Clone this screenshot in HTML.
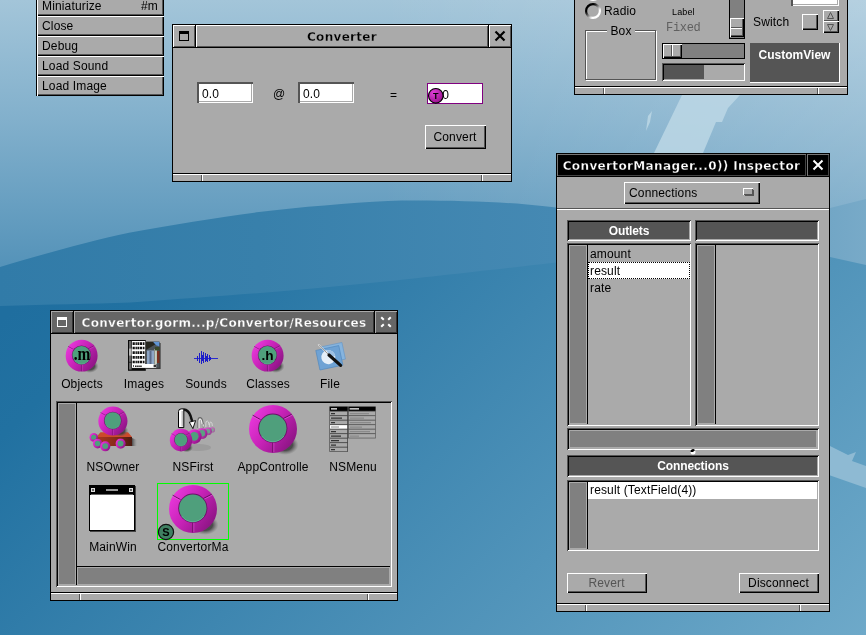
<!DOCTYPE html>
<html>
<head>
<meta charset="utf-8">
<title>Gorm - Convertor</title>
<style>
html,body{margin:0;padding:0;}
body{width:866px;height:635px;overflow:hidden;position:relative;background:#2a76a5;font-family:"Liberation Sans",sans-serif;font-size:12px;color:#000;}
.abs,.abs *{position:absolute;box-sizing:border-box;}
#bg{position:absolute;left:0;top:0;width:866px;height:635px;}
.win{background:#aaa;border:1px solid #000;}
.raised{background:#aaa;box-shadow:inset 1px 1px 0 #fff,inset -1px -1px 0 #000,inset -2px -2px 0 #555;}
.sunken{box-shadow:inset 1px 1px 0 #555,inset -1px -1px 0 #fff,inset 2px 2px 0 #000,inset -2px -2px 0 #aaa;}
.field{background:#fff;box-shadow:inset 2px 2px 0 #555,inset -1px -1px 0 #fff,inset -2px -2px 0 #aaa;}
.tb{background:#aaa;box-shadow:inset 1px 1px 0 #fff,inset -1px -1px 0 #555;}
.tbk{background:#000;box-shadow:inset 1px 1px 0 #777,inset -1px -1px 0 #444;}
.tbm{background:#666;box-shadow:inset 1px 1px 0 #aaa,inset -1px -1px 0 #333;}
.ttl{font-family:"DejaVu Sans","Liberation Sans",sans-serif;font-weight:bold;font-size:12px;letter-spacing:0.3px;text-align:center;white-space:nowrap;line-height:24px;}
.bl{background:#000;}
.t{white-space:nowrap;line-height:14px;letter-spacing:0.15px;margin-top:1px;}
.hdr{background:#555;color:#fff;font-weight:bold;text-align:center;line-height:23px;letter-spacing:-0.1px;box-shadow:inset 1px 1px 0 #555,inset -1px -1px 0 #fff,inset 2px 2px 0 #000,inset -2px -2px 0 #aaa;}
.scr{background:#808080;}
.rb{background:#aaa;}
</style>
</head>
<body>
<svg id="bg" width="866" height="635" viewBox="0 0 866 635">
<defs>
<linearGradient id="g1" gradientUnits="userSpaceOnUse" x1="0" y1="0" x2="0" y2="265"><stop offset="0" stop-color="#a3c5d9"/><stop offset="0.45" stop-color="#82b0cc"/><stop offset="1" stop-color="#5593b9"/></linearGradient>
<linearGradient id="g1b" gradientUnits="userSpaceOnUse" x1="380" y1="0" x2="866" y2="0"><stop offset="0" stop-color="#fff" stop-opacity="0"/><stop offset="1" stop-color="#fff" stop-opacity="0.2"/></linearGradient>
<linearGradient id="gm" gradientUnits="userSpaceOnUse" x1="0" y1="0" x2="866" y2="0"><stop offset="0" stop-color="#317ba8"/><stop offset="0.3" stop-color="#3880ab"/><stop offset="0.64" stop-color="#4589b3"/><stop offset="1" stop-color="#78aac8"/></linearGradient>
<linearGradient id="g2" gradientUnits="userSpaceOnUse" x1="0" y1="320" x2="590" y2="910"><stop offset="0" stop-color="#1f6e9f"/><stop offset="0.1" stop-color="#2171a1"/><stop offset="1" stop-color="#6ea9c9"/></linearGradient>
</defs>
<rect width="866" height="635" fill="url(#g1)"/>
<rect width="866" height="300" fill="url(#g1b)"/>
<path d="M654,153 L682,95 L740,95 L728,108 L722,122 L716,122 L703,153 Z M646,131 L648,116 L652,111 L650,122 Z" fill="#bcd7e5" opacity="0.85"/>
<path d="M0,267 C40,255 90,241 129,232.7 C170,225 220,217 259,212 C300,207 350,203 388,201 C420,200 480,201 517,203.6 C530,204.6 545,206.4 556,207.5 C650,215 760,214 830,208 L866,199 L866,635 L0,635 Z" fill="url(#gm)"/>
<path d="M0,306 C50,304.5 90,304 130,302.6 C180,299 220,296 260,293 C310,289 350,285 390,281 C420,278 490,270 517,267 C540,264.5 600,256 700,254 C760,253 800,254 830,257 L866,265 L866,635 L0,635 Z" fill="url(#g2)"/>
<path d="M826,444 L848,455 L856,452 L852,461 L866,466 L866,488 L826,474 Z" fill="#8ebad3"/>
</svg>
<div class="abs" id="root" style="left:0;top:0;width:866px;height:635px;will-change:transform;">

<!-- menu -->
<div id="menu" style="left:36px;top:-5px;width:128px;height:101px;background:#000;">
  <div class="raised" style="left:1px;top:1px;width:127px;height:20px;"><div class="t" style="left:5px;top:2px;">Miniaturize</div><div class="t" style="right:6px;top:2px;">#m</div></div>
  <div class="raised" style="left:1px;top:21px;width:127px;height:20px;"><div class="t" style="left:5px;top:2px;">Close</div></div>
  <div class="raised" style="left:1px;top:41px;width:127px;height:20px;"><div class="t" style="left:5px;top:2px;">Debug</div></div>
  <div class="raised" style="left:1px;top:61px;width:127px;height:20px;"><div class="t" style="left:5px;top:2px;">Load Sound</div></div>
  <div class="raised" style="left:1px;top:81px;width:127px;height:20px;"><div class="t" style="left:5px;top:2px;">Load Image</div></div>
</div>

<!-- Converter window -->
<div id="conv" class="win" style="left:172px;top:24px;width:340px;height:158px;">
  <div class="tb" style="left:0;top:0;width:22px;height:22px;">
    <div style="left:6px;top:6px;width:10px;height:10px;border:1px solid #000;border-top-width:3px;"></div>
  </div>
  <div class="bl" style="left:22px;top:0;width:1px;height:22px;"></div>
  <div class="tb ttl" style="left:23px;top:0;width:292px;height:22px;-webkit-text-stroke:0.3px #aaa;">Converter</div>
  <div class="bl" style="left:315px;top:0;width:1px;height:22px;"></div>
  <div class="tb" style="left:316px;top:0;width:22px;height:22px;">
    <svg style="left:5px;top:5px;" width="12" height="12" viewBox="0 0 12 12"><path d="M1.5,1.5 L10.5,10.5 M10.5,1.5 L1.5,10.5" stroke="#000" stroke-width="2.2" fill="none"/></svg>
  </div>
  <div class="bl" style="left:0;top:22px;width:338px;height:1px;"></div>
  <!-- content -->
  <div class="field" style="left:24px;top:57px;width:56px;height:21px;"><div class="t" style="left:5px;top:4px;">0.0</div></div>
  <div class="t" style="left:100px;top:61px;">@</div>
  <div class="field" style="left:125px;top:57px;width:56px;height:21px;"><div class="t" style="left:5px;top:4px;">0.0</div></div>
  <div class="t" style="left:217px;top:62px;">=</div>
  <div style="left:254px;top:58px;width:56px;height:21px;background:#fff;border:1px solid #800080;"><div class="t" style="left:4px;top:3px;">0.0</div></div>
  <svg style="left:254px;top:62px;" width="18" height="18" viewBox="0 0 18 18"><defs><radialGradient id="tg" cx="0.35" cy="0.3" r="0.75"><stop offset="0" stop-color="#e040d8"/><stop offset="1" stop-color="#98108c"/></radialGradient></defs><circle cx="8.8" cy="8.8" r="7.3" fill="url(#tg)" stroke="#000" stroke-width="1.1"/><text x="8.8" y="12" font-size="9" font-weight="bold" text-anchor="middle" font-family="Liberation Sans, sans-serif" fill="#000">T</text></svg>
  <div class="raised" style="left:252px;top:100px;width:61px;height:24px;"><div class="t" style="left:0;top:4px;width:60px;text-align:center;">Convert</div></div>
  <!-- resize bar -->
  <div class="bl" style="left:0;top:148px;width:338px;height:1px;"></div>
  <div class="rb" style="left:0;top:149px;width:338px;height:7px;box-shadow:inset 0 1px 0 #fff;"></div>
  <div style="left:28px;top:150px;width:2px;height:6px;background:#555;border-right:1px solid #fff;"></div>
  <div style="left:308px;top:150px;width:2px;height:6px;background:#555;border-right:1px solid #fff;"></div>
</div>
<!-- Palette window -->
<div id="pal" class="win" style="left:574px;top:-40px;width:274px;height:135px;">
  <!-- coordinates inside: x = X-575, y = Y+39 -->
  <svg style="left:9px;top:24px;" width="18" height="36" viewBox="0 0 18 36">
    <defs><linearGradient id="rg" x1="0.15" y1="0.15" x2="0.85" y2="0.85"><stop offset="0.2" stop-color="#000"/><stop offset="0.5" stop-color="#808080"/><stop offset="0.8" stop-color="#fff"/></linearGradient></defs>
    <circle cx="9" cy="8" r="6.9" fill="#aaa" stroke="url(#rg)" stroke-width="2.2"/>
    <circle cx="9" cy="26" r="6.9" fill="#aaa" stroke="url(#rg)" stroke-width="2.2"/>
  </svg>
  <div class="t" style="left:29px;top:42px;">Radio</div>
  <div class="t" style="left:97px;top:43px;font-size:9px;">Label</div>
  <div class="t" style="left:91px;top:59px;font-family:'Liberation Mono',monospace;color:#606060;letter-spacing:-0.3px;">Fixed</div>
  <!-- box -->
  <div style="left:11px;top:70px;width:71px;height:50px;border:1px solid #fff;"></div>
  <div style="left:10px;top:69px;width:71px;height:50px;border:1px solid #555;"></div>
  <div class="t" style="left:32px;top:62px;width:28px;background:#aaa;text-align:center;">Box</div>
  <!-- vertical slider -->
  <div style="left:154px;top:0;width:16px;height:78px;background:#808080;border:1px solid #000;"></div>
  <div class="raised" style="left:155px;top:57px;width:14px;height:19px;"></div>
  <div style="left:156px;top:66px;width:11px;height:2px;background:#555;border-bottom:1px solid #fff;"></div>
  <!-- slider 1 -->
  <div style="left:87px;top:82px;width:83px;height:16px;background:#808080;border:1px solid #000;"></div>
  <div class="raised" style="left:88px;top:83px;width:19px;height:14px;"></div>
  <div style="left:96px;top:84px;width:2px;height:11px;background:#555;border-right:1px solid #fff;"></div>
  <!-- progress -->
  <div class="sunken" style="left:87px;top:102px;width:83px;height:18px;background:#aaa;"></div>
  <div style="left:89px;top:104px;width:40px;height:14px;background:#555;"></div>
  <!-- text field top -->
  <div class="field" style="left:216px;top:20px;width:48px;height:25px;"></div>
  <div class="t" style="left:178px;top:53px;">Switch</div>
  <div class="raised" style="left:227px;top:53px;width:16px;height:16px;"></div>
  <div class="raised" style="left:248px;top:49px;width:16px;height:12px;"></div>
  <div class="raised" style="left:248px;top:60px;width:16px;height:12px;"></div>
  <svg style="left:248px;top:49px;" width="16" height="23" viewBox="0 0 16 23"><path d="M4.5,8.5 L7.5,2.5 L10.5,8.5 Z" fill="#aaa" stroke="#555" stroke-width="1"/><path d="M4.5,14.5 L10.5,14.5 L7.5,20.5 Z" fill="#aaa" stroke="#555" stroke-width="1"/></svg>
  <!-- custom view -->
  <div style="left:175px;top:82px;width:90px;height:40px;background:#555;box-shadow:inset -1px -1px 0 #fff, inset 1px 1px 0 #555;"><div class="t" style="left:0;top:4px;width:89px;text-align:center;color:#fff;font-weight:bold;letter-spacing:0;">CustomView</div></div>
  <!-- resize bar -->
  <div class="bl" style="left:0;top:125px;width:272px;height:1px;"></div>
  <div class="rb" style="left:0;top:126px;width:272px;height:7px;box-shadow:inset 0 1px 0 #fff;"></div>
  <div style="left:28px;top:127px;width:2px;height:6px;background:#555;border-right:1px solid #fff;"></div>
  <div style="left:242px;top:127px;width:2px;height:6px;background:#555;border-right:1px solid #fff;"></div>
</div>
<!-- Gorm document window -->
<svg width="0" height="0" style="position:absolute">
<defs>
<linearGradient id="pg" x1="0.1" y1="0.2" x2="0.95" y2="0.8"><stop offset="0" stop-color="#e636d8"/><stop offset="0.45" stop-color="#c622b6"/><stop offset="1" stop-color="#8a1482"/></linearGradient>
<radialGradient id="sh" cx="0.5" cy="0.5" r="0.5"><stop offset="0.55" stop-color="#3a3a3a" stop-opacity="0.85"/><stop offset="1" stop-color="#666" stop-opacity="0"/></radialGradient>
<symbol id="obj" viewBox="0 0 52 52">
<ellipse cx="37" cy="41" rx="13.5" ry="10" fill="url(#sh)"/>
<circle cx="25" cy="25" r="24" fill="url(#pg)"/>
<path d="M12.5,15.6 L4.6,11.2 M35.2,14.6 L43.8,10.2 M24.8,38 L24.8,48.4" stroke="#5e0e5a" stroke-width="0.9" fill="none"/>
<path d="M12.2,16.5 L4.2,12.1 M35.6,15.5 L44.2,11.1 M25.8,38 L25.8,48.4" stroke="#f060e8" stroke-width="0.7" fill="none" opacity="0.75"/>
<circle cx="24.8" cy="24.2" r="14.6" fill="#6a1266"/>
<circle cx="24.8" cy="24.2" r="13.7" fill="#4f9f7c"/>
<path d="M13.6,32 A13.7,13.7 0 0 0 36,32" stroke="#6fe0b0" stroke-width="0.8" fill="none" opacity="0.6"/>
</symbol>
<symbol id="ball" viewBox="0 0 52 52">
<circle cx="25" cy="25" r="24" fill="url(#pg)"/>
<circle cx="24.8" cy="24.2" r="14" fill="#4f9f7c"/>
</symbol>
</defs>
</svg>
<div id="doc" class="win" style="left:50px;top:310px;width:348px;height:291px;">
  <!-- inner coords: x = X-51, y = Y-311 -->
  <div class="tbm" style="left:0;top:0;width:22px;height:22px;">
    <div style="left:6px;top:6px;width:10px;height:10px;border:1px solid #fff;border-top-width:3px;"></div>
  </div>
  <div class="bl" style="left:22px;top:0;width:1px;height:22px;"></div>
  <div class="tbm ttl" style="left:23px;top:0;width:300px;height:22px;color:#fff;-webkit-text-stroke:0.3px #666;">Convertor.gorm...p/Convertor/Resources</div>
  <div class="bl" style="left:323px;top:0;width:1px;height:22px;"></div>
  <div class="tbm" style="left:324px;top:0;width:22px;height:22px;">
    <svg style="left:5px;top:5px;" width="12" height="12" viewBox="0 0 12 12"><path d="M1.2,1.2 L3.8,3.8 M8.2,8.2 L10.8,10.8 M10.8,1.2 L8.2,3.8 M3.8,8.2 L1.2,10.8" stroke="#fff" stroke-width="2" fill="none"/></svg>
  </div>
  <div class="bl" style="left:0;top:22px;width:346px;height:1px;"></div>
  <!-- top icons -->
  <svg style="left:14.4px;top:28.3px;" width="34.6" height="34.6" viewBox="0 0 52 52"><use href="#obj"/><text transform="translate(25.6,31.6) scale(0.86,1)" font-family="Liberation Serif, serif" font-weight="bold" font-size="27" text-anchor="middle" fill="#000">.m</text></svg>
  <div class="t" style="left:0;top:65px;width:62px;text-align:center;">Objects</div>
  <!-- images icon -->
  <svg style="left:77px;top:29px;" width="34" height="33" viewBox="0 0 34 33">
    <rect x="18" y="3" width="14.6" height="26" fill="#3a3a3a"/>
    <rect x="18" y="1.7" width="13.4" height="26" fill="#4a5258"/>
    <path d="M18,1.7 H31.4 V6 L27,4.5 L18,10 Z" fill="#26261e"/>
    <path d="M25,1.7 H31.4 V6.5 L28,5.2 Z" fill="#5f94d4"/>
    <rect x="19" y="10.5" width="7" height="13.5" fill="#8ea6c6"/>
    <rect x="21.5" y="11" width="2" height="13" fill="#5a6a88"/>
    <rect x="26.5" y="9" width="2.4" height="15" fill="#c8d0c0"/>
    <rect x="29" y="11" width="2.4" height="12" fill="#7a3020"/>
    <rect x="27" y="7" width="4.4" height="3.4" fill="#3a4a28"/>
    <rect x="0" y="0" width="17.8" height="30.8" fill="#0a0a0a"/>
    <rect x="1" y="1" width="2.6" height="28.6" fill="#666"/>
    <rect x="1" y="8.6" width="2.6" height="7" fill="#b8b8b8"/>
    <rect x="1" y="21.8" width="2.6" height="0.8" fill="#111"/>
    <rect x="4" y="1" width="13.2" height="27.4" fill="#fff"/>
    <path d="M4.6,3.6 H17 M4.6,8 H17 M4.6,12.6 H17 M4.6,17.4 H17 M4.6,22 H17" stroke="#111" stroke-width="2.7" stroke-dasharray="2.2 0.7 1.4 0.5 1.8 0.6" fill="none"/>
    <rect x="4" y="24" width="24.2" height="3.9" fill="#fff"/>
    <path d="M5,26 H6 M7,26.2 H14" stroke="#222" stroke-width="1.6" stroke-dasharray="1.6 0.5"/>
    <rect x="25.6" y="24.6" width="2.4" height="2.6" fill="#333"/>
    <rect x="4" y="27.9" width="13.2" height="1.2" fill="#111"/>
  </svg>
  <div class="t" style="left:62px;top:65px;width:62px;text-align:center;">Images</div>
  <!-- sounds icon -->
  <svg style="left:142px;top:39px;" width="26" height="16" viewBox="0 0 26 16" shape-rendering="crispEdges">
    <path d="M1,8.5 H25" stroke="#2a2ad0" stroke-width="1"/>
    <path d="M4.5,6 V11 M6.5,3 V13 M8.5,1 V14 M9.5,5 V11 M10.5,2 V13 M12.5,3 V12 M13.5,6 V11 M14.5,4 V12 M16.5,5 V11 M17.5,7 V10" stroke="#1c1cc8" stroke-width="1"/>
  </svg>
  <div class="t" style="left:124px;top:65px;width:62px;text-align:center;">Sounds</div>
  <svg style="left:200.4px;top:28.3px;" width="34.6" height="34.6" viewBox="0 0 52 52"><use href="#obj"/><text x="24.8" y="31.6" font-family="Liberation Sans, sans-serif" font-weight="bold" font-size="20.5" text-anchor="middle" fill="#000">.h</text></svg>
  <div class="t" style="left:186px;top:65px;width:62px;text-align:center;">Classes</div>
  <!-- file icon -->
  <svg style="left:262px;top:28px;" width="36" height="34" viewBox="0 0 36 34">
    <g transform="rotate(-12 20.2 14)"><rect x="9.4" y="5.5" width="21.5" height="17" fill="#86b4de" stroke="#6496c8" stroke-width="0.6"/></g>
    <g transform="rotate(-12 16.3 18.8)"><rect x="4.6" y="8.8" width="23.5" height="20" fill="#6ea2d4" stroke="#4f86bc" stroke-width="0.6"/>
      <circle cx="15.5" cy="18" r="7" fill="#e4eef8"/>
      <path d="M15.5,11 A7,7 0 0 1 22.5,18 L18,19 L15.5,15 Z" fill="#9cc0e4"/>
    </g>
    <path d="M5.6,5.8 L16,16" stroke="#f0f0f0" stroke-width="1.5" stroke-linecap="round"/>
    <path d="M5.6,5.8 L16,16" stroke="#555" stroke-width="0.6"/>
    <path d="M16,16 L27.6,26.4" stroke="#111" stroke-width="3.2" stroke-linecap="round"/>
  </svg>
  <div class="t" style="left:248px;top:65px;width:62px;text-align:center;">File</div>
  <!-- scroll view -->
  <div class="sunken" style="left:5px;top:90px;width:336px;height:186px;background:#aaa;"></div>
  <div class="scr" style="left:8px;top:93px;width:16px;height:180px;"></div>
  <div class="bl" style="left:25px;top:92px;width:1px;height:182px;"></div>
  <div class="bl" style="left:25px;top:255px;width:314px;height:1px;"></div>
  <div class="scr" style="left:27px;top:257px;width:311px;height:16px;"></div>
  <!-- NSOwner -->
  <svg style="left:36px;top:92px;" width="56" height="52" viewBox="87 403 56 52">
    <defs><linearGradient id="ped" x1="0" y1="0" x2="1" y2="0"><stop offset="0" stop-color="#a83820"/><stop offset="0.5" stop-color="#8a2c1a"/><stop offset="1" stop-color="#4a1a10"/></linearGradient>
    <linearGradient id="pedsh" x1="0" y1="0" x2="1" y2="0"><stop offset="0" stop-color="#333" stop-opacity="0.8"/><stop offset="1" stop-color="#777" stop-opacity="0"/></linearGradient></defs>
    <path d="M132,438 L137,440 L137,446 L132,446 Z" fill="url(#pedsh)"/>
    <path d="M96.5,437 L100.5,432.3 L128,432.3 L132,437 Z" fill="#cc4a2a"/>
    <path d="M96.5,437 L132,437 L132,446 L96.5,446 Z" fill="url(#ped)"/>
    <use href="#obj" x="97.7" y="405.8" width="31.6" height="31.6"/>
    <use href="#ball" x="89.2" y="432.8" width="9.4" height="9.4"/>
    <use href="#ball" x="92.6" y="438.6" width="10.4" height="10.4"/>
    <use href="#ball" x="100" y="441" width="11" height="11"/>
    <use href="#ball" x="115.3" y="438.3" width="11" height="11"/>
  </svg>
  <!-- NSFirst -->
  <svg style="left:116px;top:92px;" width="56" height="52" viewBox="167 403 56 52">
    <ellipse cx="198" cy="447.5" rx="13" ry="3.6" fill="#888" opacity="0.4"/>
    <g opacity="0.45"><use href="#ball" x="209.4" y="427" width="6" height="6"/></g>
    <g opacity="0.65"><use href="#ball" x="203.8" y="427.2" width="8.6" height="8.6"/></g>
    <g opacity="0.85"><use href="#ball" x="196.2" y="427.7" width="12" height="12"/></g>
    <use href="#ball" x="186.6" y="428.9" width="16" height="16"/>
    <path d="M205.8,427 V423.5 Q205.8,421 207.3,421 Q208.8,421 209,425 M209.6,427 V424 Q209.6,422 210.9,422 Q212.2,422 212.4,426" stroke="#eee" stroke-width="0.8" fill="none" opacity="0.7"/>
    <path d="M198,428 V420.5 Q198,417.6 200.2,417.6 Q202.6,417.6 203.2,424.5" stroke="#555" stroke-width="1.1" fill="none" opacity="0.8"/>
    <path d="M199,428 V421 Q199,418.8 200.2,418.8 Q201.6,418.8 202.2,424.5" stroke="#fff" stroke-width="0.9" fill="none"/>
    <path d="M202,424.5 L204.4,424 L203.4,428 Z" fill="#eee" stroke="#666" stroke-width="0.4"/>
    <path d="M183.6,409.6 Q188.5,410 190.3,415.5 L192.6,423" stroke="#111" stroke-width="2.6" fill="none"/>
    <path d="M184,411 Q187.4,411.6 188.8,416 L191,423" stroke="#999" stroke-width="0.8" fill="none"/>
    <path d="M178.5,427.6 V411.6 Q178.5,408.9 181.2,408.9 H183.8 V427.6 Z" fill="#fff" stroke="#000" stroke-width="1" stroke-linejoin="round"/>
    <path d="M182.2,411 V426.6" stroke="#bbb" stroke-width="1.4"/>
    <path d="M189.3,422.2 L195.6,420.6 L192.9,428.6 Z" fill="#fff" stroke="#000" stroke-width="0.9" stroke-linejoin="round"/>
    <use href="#obj" x="169.3" y="428.4" width="24.4" height="24.4"/>
  </svg>
  <!-- AppController -->
  <svg style="left:197px;top:93px;" width="52" height="52" viewBox="0 0 52 52"><use href="#obj"/></svg>
  <!-- NSMenu -->
  <svg style="left:278px;top:95px;" width="48" height="47" viewBox="329 406 48 47">
    <rect x="329.4" y="406.4" width="18.6" height="45.4" fill="#444"/>
    <rect x="348" y="406.4" width="27.8" height="32" fill="#555"/>
    <rect x="329.8" y="406.8" width="17.6" height="4" fill="#000"/>
    <rect x="348.6" y="406.8" width="26.8" height="4" fill="#000"/>
    <g fill="#aaa">
      <rect x="330" y="411.6" width="17.2" height="3.6"/><rect x="330" y="416.1" width="17.2" height="3.6"/><rect x="330" y="420.6" width="17.2" height="3.6"/>
      <rect x="330" y="425.1" width="17.2" height="3.6" fill="#fff"/><rect x="330" y="429.6" width="17.2" height="3.6"/><rect x="330" y="434.1" width="17.2" height="3.6"/>
      <rect x="330" y="438.6" width="17.2" height="3.6"/><rect x="330" y="443.1" width="17.2" height="3.6"/><rect x="330" y="447.6" width="17.2" height="3.6"/>
      <rect x="348.8" y="411.6" width="26.4" height="3.6"/><rect x="348.8" y="416.1" width="26.4" height="3.6"/><rect x="348.8" y="420.6" width="26.4" height="3.6"/>
      <rect x="348.8" y="425.1" width="26.4" height="3.6"/><rect x="348.8" y="429.6" width="26.4" height="3.6"/><rect x="348.8" y="434.1" width="26.4" height="3.6"/>
    </g>
    <path d="M331,408.8 H337 M349.6,408.8 H359" stroke="#fff" stroke-width="1.2"/>
    <path d="M331,413.6 H335 M331,418.1 H342 M331,422.6 H335 M331,431.6 H336 M331,436.1 H341 M331,440.6 H339 M331,445.1 H336 M331,449.6 H335" stroke="#333" stroke-width="1.3"/>
    <path d="M331,427 H339" stroke="#888" stroke-width="1"/>
    <path d="M349.8,413.6 H369 M349.8,418.1 H364 M349.8,422.6 H371 M349.8,427.1 H362 M349.8,431.6 H370 M349.8,436.1 H359" stroke="#8a8a8a" stroke-width="1.2"/>
  </svg>
  <!-- MainWin -->
  <div style="left:39px;top:175px;width:46px;height:46px;background:#444;"></div>
  <div style="left:38px;top:174px;width:46px;height:46px;background:#fff;border:1px solid #000;border-top-width:10px;"></div>
  <div style="left:40px;top:177px;width:4px;height:4px;border:1px solid #ddd;background:#666;"></div>
  <div style="left:78px;top:177px;width:4px;height:4px;border:1px solid #ddd;background:#666;"></div>
  <div style="left:55px;top:178px;width:12px;height:2px;background:#999;"></div>
  <div style="left:40px;top:183px;width:42px;height:1px;background:#666;"></div>
  <!-- ConvertorManager -->
  <svg style="left:117px;top:173px;" width="52" height="52" viewBox="0 0 52 52"><use href="#obj"/></svg>
  <div style="left:106px;top:172px;width:72px;height:57px;border:1px solid #0f0;"></div>
  <svg style="left:106px;top:212px;" width="18" height="18" viewBox="0 0 18 18"><circle cx="9" cy="9" r="7.6" fill="#3f8062" stroke="#111" stroke-width="1.2"/><text x="9" y="13" font-family="Liberation Sans, sans-serif" font-weight="bold" font-size="11" text-anchor="middle" fill="#000">S</text></svg>
  <div class="t" style="left:26px;top:148px;width:72px;text-align:center;">NSOwner</div>
  <div class="t" style="left:106px;top:148px;width:72px;text-align:center;">NSFirst</div>
  <div class="t" style="left:186px;top:148px;width:72px;text-align:center;">AppControlle</div>
  <div class="t" style="left:266px;top:148px;width:72px;text-align:center;">NSMenu</div>
  <div class="t" style="left:26px;top:228px;width:72px;text-align:center;">MainWin</div>
  <div class="t" style="left:106px;top:228px;width:72px;text-align:center;">ConvertorMa</div>
  <!-- resize bar -->
  <div class="bl" style="left:0;top:281px;width:346px;height:1px;"></div>
  <div class="rb" style="left:0;top:282px;width:346px;height:7px;box-shadow:inset 0 1px 0 #fff;"></div>
  <div style="left:28px;top:283px;width:2px;height:6px;background:#555;border-right:1px solid #fff;"></div>
  <div style="left:316px;top:283px;width:2px;height:6px;background:#555;border-right:1px solid #fff;"></div>
</div>
<!-- Inspector window -->
<div id="insp" class="win" style="left:556px;top:153px;width:274px;height:459px;">
  <!-- inner coords: x = X-557, y = Y-154 -->
  <div class="tbk ttl" style="left:0;top:0;width:249px;height:22px;color:#fff;-webkit-text-stroke:0.3px #000;letter-spacing:0.36px;">ConvertorManager...0)) Inspector</div>
  <div class="bl" style="left:249px;top:0;width:1px;height:22px;"></div>
  <div class="tbk" style="left:250px;top:0;width:22px;height:22px;">
    <svg style="left:5px;top:5px;" width="12" height="12" viewBox="0 0 12 12"><path d="M1.5,1.5 L10.5,10.5 M10.5,1.5 L1.5,10.5" stroke="#fff" stroke-width="2" fill="none"/></svg>
  </div>
  <div class="bl" style="left:0;top:22px;width:272px;height:1px;"></div>
  <!-- popup -->
  <div class="raised" style="left:67px;top:28px;width:136px;height:22px;"><div class="t" style="left:5px;top:3px;">Connections</div>
    <div style="left:121px;top:8px;width:9px;height:6px;background:#555;"></div>
    <div style="left:119px;top:6px;width:10px;height:7px;background:#aaa;box-shadow:inset 1px 1px 0 #fff,inset -1px -1px 0 #555;"></div>
  </div>
  <div style="left:0;top:54px;width:272px;height:1px;background:#555;"></div>
  <div style="left:0;top:55px;width:272px;height:1px;background:#fff;"></div>
  <!-- browser -->
  <div class="hdr" style="left:10px;top:66px;width:124px;height:21px;">Outlets</div>
  <div class="hdr" style="left:138px;top:66px;width:124px;height:21px;"></div>
  <div class="sunken" style="left:10px;top:89px;width:124px;height:183px;"></div>
  <div class="scr" style="left:13px;top:92px;width:16px;height:177px;"></div>
  <div class="bl" style="left:30px;top:91px;width:1px;height:179px;"></div>
  <div class="t" style="left:33px;top:92px;">amount</div>
  <div style="left:31px;top:108px;width:102px;height:17px;background:#fff;outline:1px dotted #000;outline-offset:-1px;"></div>
  <div class="t" style="left:33px;top:109px;">result</div>
  <div class="t" style="left:33px;top:126px;">rate</div>
  <div class="sunken" style="left:138px;top:89px;width:124px;height:183px;"></div>
  <div class="scr" style="left:141px;top:92px;width:16px;height:177px;"></div>
  <div class="bl" style="left:158px;top:91px;width:1px;height:179px;"></div>
  <!-- horizontal scroller -->
  <div class="sunken" style="left:10px;top:274px;width:252px;height:22px;"></div>
  <div class="scr" style="left:13px;top:277px;width:246px;height:16px;"></div>
  <!-- splitter dimple -->
  <svg style="left:132px;top:294px;" width="8" height="8" viewBox="0 0 8 8"><circle cx="4" cy="4" r="2.5" fill="#fff"/><path d="M1.5,4 A2.5,2.5 0 0 1 6,2.2 L4,4 Z" fill="#000"/></svg>
  <!-- connections -->
  <div class="hdr" style="left:10px;top:301px;width:252px;height:22px;">Connections</div>
  <div class="sunken" style="left:10px;top:326px;width:252px;height:71px;"></div>
  <div class="scr" style="left:13px;top:329px;width:16px;height:65px;"></div>
  <div class="bl" style="left:30px;top:328px;width:1px;height:67px;"></div>
  <div style="left:31px;top:328px;width:229px;height:17px;background:#fff;"></div>
  <div class="t" style="left:33px;top:328px;">result (TextField(4))</div>
  <!-- buttons -->
  <div class="raised" style="left:10px;top:419px;width:80px;height:20px;"><div class="t" style="left:0;top:2px;width:79px;text-align:center;color:#555;">Revert</div></div>
  <div class="raised" style="left:182px;top:419px;width:80px;height:20px;"><div class="t" style="left:0;top:2px;width:79px;text-align:center;">Disconnect</div></div>
  <!-- resize bar -->
  <div class="bl" style="left:0;top:449px;width:272px;height:1px;"></div>
  <div class="rb" style="left:0;top:450px;width:272px;height:7px;box-shadow:inset 0 1px 0 #fff;"></div>
  <div style="left:28px;top:451px;width:2px;height:6px;background:#555;border-right:1px solid #fff;"></div>
  <div style="left:242px;top:451px;width:2px;height:6px;background:#555;border-right:1px solid #fff;"></div>
</div>

</div>
</body>
</html>
